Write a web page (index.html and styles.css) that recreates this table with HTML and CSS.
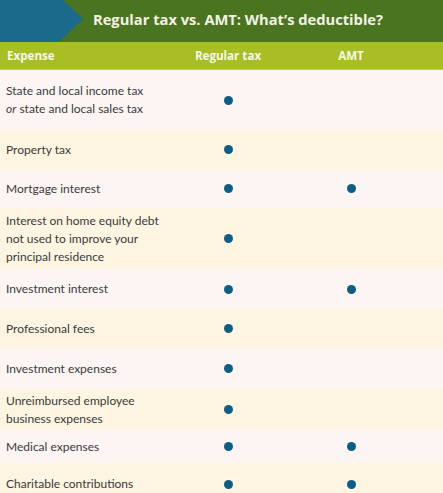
FILE: index.html
```html
<!DOCTYPE html>
<html>
<head>
<meta charset="utf-8">
<link rel="stylesheet" href="styles.css">
</head>
<body>
<div class="chart">
  <div class="banner">
    <svg class="arrow" width="84" height="42" viewBox="0 0 84 42" aria-hidden="true">
      <polygon points="0,0 63,0 83,19 59,42 0,42" fill="#1b6a8c"/>
    </svg>
    <h1 class="title">Regular tax vs. AMT: What’s deductible?</h1>
  </div>
  <div class="row head">
    <div class="cell name">Expense</div>
    <div class="cell mark">Regular tax</div>
    <div class="cell mark">AMT</div>
  </div>
  <div class="row r1">
    <div class="cell name">State and local income tax<br><em>or</em> state and local sales tax</div>
    <div class="cell mark"><span class="dot"></span></div>
    <div class="cell mark"></div>
  </div>
  <div class="row r2 alt">
    <div class="cell name">Property tax</div>
    <div class="cell mark"><span class="dot"></span></div>
    <div class="cell mark"></div>
  </div>
  <div class="row r3">
    <div class="cell name">Mortgage interest</div>
    <div class="cell mark"><span class="dot"></span></div>
    <div class="cell mark"><span class="dot"></span></div>
  </div>
  <div class="row r4 alt">
    <div class="cell name">Interest on home equity debt<br>not used to improve your<br>principal residence</div>
    <div class="cell mark"><span class="dot"></span></div>
    <div class="cell mark"></div>
  </div>
  <div class="row r5">
    <div class="cell name">Investment interest</div>
    <div class="cell mark"><span class="dot"></span></div>
    <div class="cell mark"><span class="dot"></span></div>
  </div>
  <div class="row r6 alt">
    <div class="cell name">Professional fees</div>
    <div class="cell mark"><span class="dot"></span></div>
    <div class="cell mark"></div>
  </div>
  <div class="row r7">
    <div class="cell name">Investment expenses</div>
    <div class="cell mark"><span class="dot"></span></div>
    <div class="cell mark"></div>
  </div>
  <div class="row r8 alt">
    <div class="cell name">Unreimbursed employee<br>business expenses</div>
    <div class="cell mark"><span class="dot"></span></div>
    <div class="cell mark"></div>
  </div>
  <div class="row r9">
    <div class="cell name">Medical expenses</div>
    <div class="cell mark"><span class="dot"></span></div>
    <div class="cell mark"><span class="dot"></span></div>
  </div>
  <div class="row r10 alt">
    <div class="cell name">Charitable contributions</div>
    <div class="cell mark"><span class="dot"></span></div>
    <div class="cell mark"><span class="dot"></span></div>
  </div>
</div>
</body>
</html>
```
FILE: styles.css
```css
html, body {
  margin: 0;
  padding: 0;
  background: #fcf5f4;
}
.chart {
  width: 443px;
  font-family: Lato, "Open Sans", sans-serif;
  color: #3a3a3a;
}
.banner {
  display: flex;
  align-items: center;
  height: 42px;
  background: #4b7420;
}
.arrow {
  display: block;
  flex: none;
}
.title {
  margin: 0 0 0 9px;
  font-family: "Open Sans", sans-serif;
  font-size: 14.7px;
  font-weight: 700;
  color: #f1f2e4;
  line-height: 1;
  padding-bottom: 3px;
}
.row {
  display: grid;
  grid-template-columns: 180px 96px 150px 1fr;
  align-items: center;
  background: #fcf5f4;
}
.row.alt {
  background: #fdf5e1;
}
.row.head {
  height: 27px;
  background: #a9bd25;
  border-bottom: 1px solid #c3d34c;
  font-family: "Open Sans", sans-serif;
  font-weight: 700;
  font-size: 11.6px;
  color: #f6f8e6;
}
.cell.name {
  padding-left: 6px;
  font-size: 12px;
  line-height: 18px;
  white-space: nowrap;
}
.head .cell.name {
  font-size: 11.6px;
  padding-left: 7px;
}
.cell.mark {
  display: flex;
  justify-content: center;
  align-items: center;
}
.dot {
  display: block;
  width: 9px;
  height: 9px;
  border-radius: 50%;
  background: #0c5e86;
}
.r1 { height: 60px; }
.r2 { height: 39px; }
.r3 { height: 39px; }
.r4 { height: 61px; }
.r5 { height: 40px; }
.r6 { height: 39px; }
.r7 { height: 41px; }
.r8 { height: 41px; }
.r9 { height: 33px; }
.r10 { height: 42px; }
```
